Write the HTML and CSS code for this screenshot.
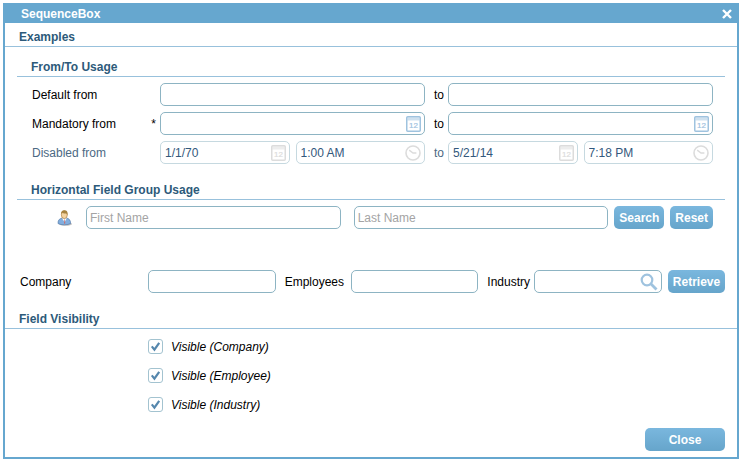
FILE: index.html
```html
<!DOCTYPE html>
<html lang="en">
<head>
<meta charset="utf-8">
<title>SequenceBox</title>
<link rel="stylesheet" href="styles.css">
</head>
<body>
<svg class="defs" aria-hidden="true">
  <symbol id="calendar" viewBox="0 0 15 16">
    <rect x="0.75" y="0.75" width="13.5" height="14.5" rx="1" fill="#fff" stroke="currentColor" stroke-width="1.5"/>
    <path d="M1.5 1.5h12v3h-12z" fill="currentColor" opacity=".5"/>
    <text x="7.5" y="12" text-anchor="middle" fill="currentColor" stroke="currentColor" stroke-width=".2" class="day">12</text>
  </symbol>
  <symbol id="clock" viewBox="0 0 16 16">
    <circle cx="8" cy="8" r="7" fill="#fff" stroke="currentColor" stroke-width="1.6"/>
    <path d="M4.2 5.2 8 8h3.4" fill="none" stroke="currentColor" stroke-width="1.5"/>
  </symbol>
</svg>
<form class="dialog">
  <header class="titlebar">
    <h1>SequenceBox</h1>
    <button type="button" class="dismiss" aria-label="Dismiss">
      <svg width="10" height="10" viewBox="0 0 10 10"><path d="M1 1l8 8M9 1l-8 8" stroke="#fff" stroke-width="2.4"/></svg>
    </button>
  </header>

  <h2>Examples</h2>

  <section class="group">
    <h3>From/To Usage</h3>
    <div class="rows">
      <div class="sequence">
        <label for="default-from">Default from</label>
        <input type="text" id="default-from">
        <label class="to" for="default-to">to</label>
        <input type="text" id="default-to">
      </div>
      <div class="sequence">
        <label for="mandatory-from">Mandatory from <span class="star">*</span></label>
        <span class="field"><input type="text" id="mandatory-from"><svg class="icon calendar"><use href="#calendar"/></svg></span>
        <label class="to" for="mandatory-to">to</label>
        <span class="field"><input type="text" id="mandatory-to"><svg class="icon calendar"><use href="#calendar"/></svg></span>
      </div>
      <div class="sequence disabled">
        <label for="disabled-from">Disabled from</label>
        <div class="datetime">
          <span class="field"><input type="text" id="disabled-from" value="1/1/70" disabled><svg class="icon calendar"><use href="#calendar"/></svg></span>
          <span class="field"><input type="text" aria-label="From time" value="1:00 AM" disabled><svg class="icon clock"><use href="#clock"/></svg></span>
        </div>
        <label class="to" for="disabled-to">to</label>
        <div class="datetime">
          <span class="field"><input type="text" id="disabled-to" value="5/21/14" disabled><svg class="icon calendar"><use href="#calendar"/></svg></span>
          <span class="field"><input type="text" aria-label="To time" value="7:18 PM" disabled><svg class="icon clock"><use href="#clock"/></svg></span>
        </div>
      </div>
    </div>
  </section>

  <section class="group">
    <h3>Horizontal Field Group Usage</h3>
    <div class="person">
      <svg class="avatar" width="16" height="16" viewBox="0 0 16 16" aria-hidden="true">
        <ellipse cx="8.5" cy="14" rx="6.5" ry="1.8" fill="#999" opacity=".6"/>
        <path d="M1 13.5C.8 9.8 3 8.4 5.4 8h3.8c2.8.4 4.4 2 4.4 5.5-2.5 1.7-10 1.8-12.6 0z" fill="#82aede" stroke="#587dab" stroke-width=".7"/>
        <path d="M5 8.3 7.6 12 9.8 8.3z" fill="#fff"/>
        <path d="M7.5 9.2 7.1 13.2l.7.8.5-.9-.4-3.9z" fill="#c86868"/>
        <ellipse cx="7.3" cy="4.8" rx="3" ry="3.8" fill="#f3d3a2" stroke="#a87532" stroke-width=".6"/>
        <path d="M4.2 4.3C3.7 1.3 5.4.2 7.4.2c2.6 0 3.7 1.8 3 5.4L9.5 3.4C7.5 3.7 5.9 3.2 5.1 2.7z" fill="#a78340"/>
      </svg>
      <input type="text" placeholder="First Name" aria-label="First Name">
      <input type="text" placeholder="Last Name" aria-label="Last Name">
      <div class="actions">
        <button type="button">Search</button>
        <button type="button">Reset</button>
      </div>
    </div>
  </section>

  <div class="company">
    <label for="company">Company</label>
    <input type="text" id="company">
    <label for="employees">Employees</label>
    <input type="text" id="employees">
    <label for="industry">Industry</label>
    <span class="field"><input type="text" id="industry"><svg class="icon search" viewBox="0 0 18 18"><circle cx="7" cy="7" r="5.3" fill="none" stroke="currentColor" stroke-width="2.2"/><path d="M10.8 10.8 16.5 16.5" stroke="currentColor" stroke-width="2.8"/></svg></span>
    <button type="button">Retrieve</button>
  </div>

  <h2 class="visibility">Field Visibility</h2>
  <div class="checks">
    <label><input type="checkbox" checked>Visible (Company)</label>
    <label><input type="checkbox" checked>Visible (Employee)</label>
    <label><input type="checkbox" checked>Visible (Industry)</label>
  </div>

  <footer>
    <button type="button" class="close">Close</button>
  </footer>
</form>
</body>
</html>
```
FILE: styles.css
```css
* {
  box-sizing: border-box;
}

body {
  margin: 3px 2px 2px 3px;
  background: #fff;
  color: #000;
  font: 12px/16px "Liberation Sans", Arial, sans-serif;
}

h1, h2, h3 {
  margin: 0;
  font-size: 12px;
  line-height: 16px;
  font-weight: bold;
}

.defs {
  display: none;
}

.day {
  font: 8px "Liberation Sans", Arial, sans-serif;
}

.dialog {
  border: 2px solid #66a7cf;
}

.titlebar {
  display: flex;
  align-items: center;
  justify-content: space-between;
  height: 18px;
  padding: 0 5px 0 16px;
  background: #66a7cf;
  color: #fff;
}

.titlebar .dismiss {
  display: flex;
  align-items: center;
  height: 16px;
  padding: 0;
  border: 0;
  background: none;
}

h2 {
  padding: 6px 14px 1px;
  border-bottom: 1px solid #98c1dc;
  color: #2d5a7a;
}

.group {
  margin: 0 12px;
}

h3 {
  margin-bottom: 6px;
  padding: 12px 14px 1px;
  border-bottom: 1px solid #98c1dc;
  color: #2d5a7a;
}

.group + .group h3 {
  padding-top: 18px;
}

input[type="text"] {
  display: block;
  width: 100%;
  min-width: 0;
  height: 23px;
  padding: 1px 3px 0;
  border: 1px solid #8db4c3;
  border-radius: 5px;
  background: #fff;
  color: #000;
  font: inherit;
}

input::placeholder {
  color: #a4a4a4;
  opacity: 1;
}

button {
  height: 23px;
  padding: 0 5px;
  border: 0;
  border-radius: 5px;
  background: linear-gradient(#7ab7de, #66a5cb);
  color: #fff;
  font: bold 12px/16px "Liberation Sans", Arial, sans-serif;
}

.rows {
  display: grid;
  gap: 6px;
  padding: 0 12px 0 15px;
}

.sequence {
  display: grid;
  grid-template-columns: 128px 1fr 23px 1fr;
  align-items: center;
}

.sequence label {
  display: flex;
  justify-content: space-between;
  padding-right: 4px;
}

.sequence .to {
  padding: 0 0 0 9px;
}

.sequence input[type="text"] {
  padding: 1px 4px 0;
}

.datetime {
  display: grid;
  grid-template-columns: 1fr 1fr;
  gap: 6px;
}

.disabled label {
  color: #4c6983;
}

.disabled input[type="text"] {
  border-color: #c6d9e0;
  color: #33587c;
}

.field {
  position: relative;
}

.icon {
  position: absolute;
  top: 0;
  bottom: 0;
  right: 4px;
  margin: auto 0;
  color: #9fc3df;
}

.calendar {
  width: 15px;
  height: 16px;
}

.clock {
  width: 16px;
  height: 16px;
}

.search {
  width: 18px;
  height: 18px;
}

.disabled .icon {
  color: #dcdcdc;
}

.person {
  display: grid;
  grid-template-columns: 16px 1fr 1fr auto;
  column-gap: 13px;
  align-items: center;
  padding: 0 12px 0 40px;
}

.actions {
  display: flex;
  gap: 6px;
  margin-left: -7px;
}

.company {
  display: grid;
  grid-template-columns: 128px 1fr 75px 1fr 56px 1fr auto;
  align-items: center;
  margin-top: 41px;
  padding: 0 12px 0 15px;
}

.company input + label {
  padding-left: 9px;
}

.company button {
  width: 57px;
  margin-left: 6px;
  padding: 0;
}

.visibility {
  padding-top: 18px;
}

.checks {
  display: grid;
  justify-items: start;
  gap: 6px;
  padding: 6px 0 0 143px;
}

.checks label {
  display: flex;
  align-items: center;
  gap: 8px;
  height: 23px;
  font-style: italic;
}

.checks input {
  appearance: none;
  width: 15px;
  height: 15px;
  margin: 0;
  border: 1px solid #a3c3d0;
  border-radius: 3px;
  background: url('data:image/svg+xml,<svg xmlns="http://www.w3.org/2000/svg" viewBox="0 0 13 13"><path d="M2.8 6.4 5.4 9.6 10.2 2.8" fill="none" stroke="%235587ad" stroke-width="2.2"/></svg>') center / 13px 13px no-repeat;
}

footer {
  display: flex;
  justify-content: flex-end;
  padding: 12px 12px 6px;
}

.close {
  width: 80px;
}
```
